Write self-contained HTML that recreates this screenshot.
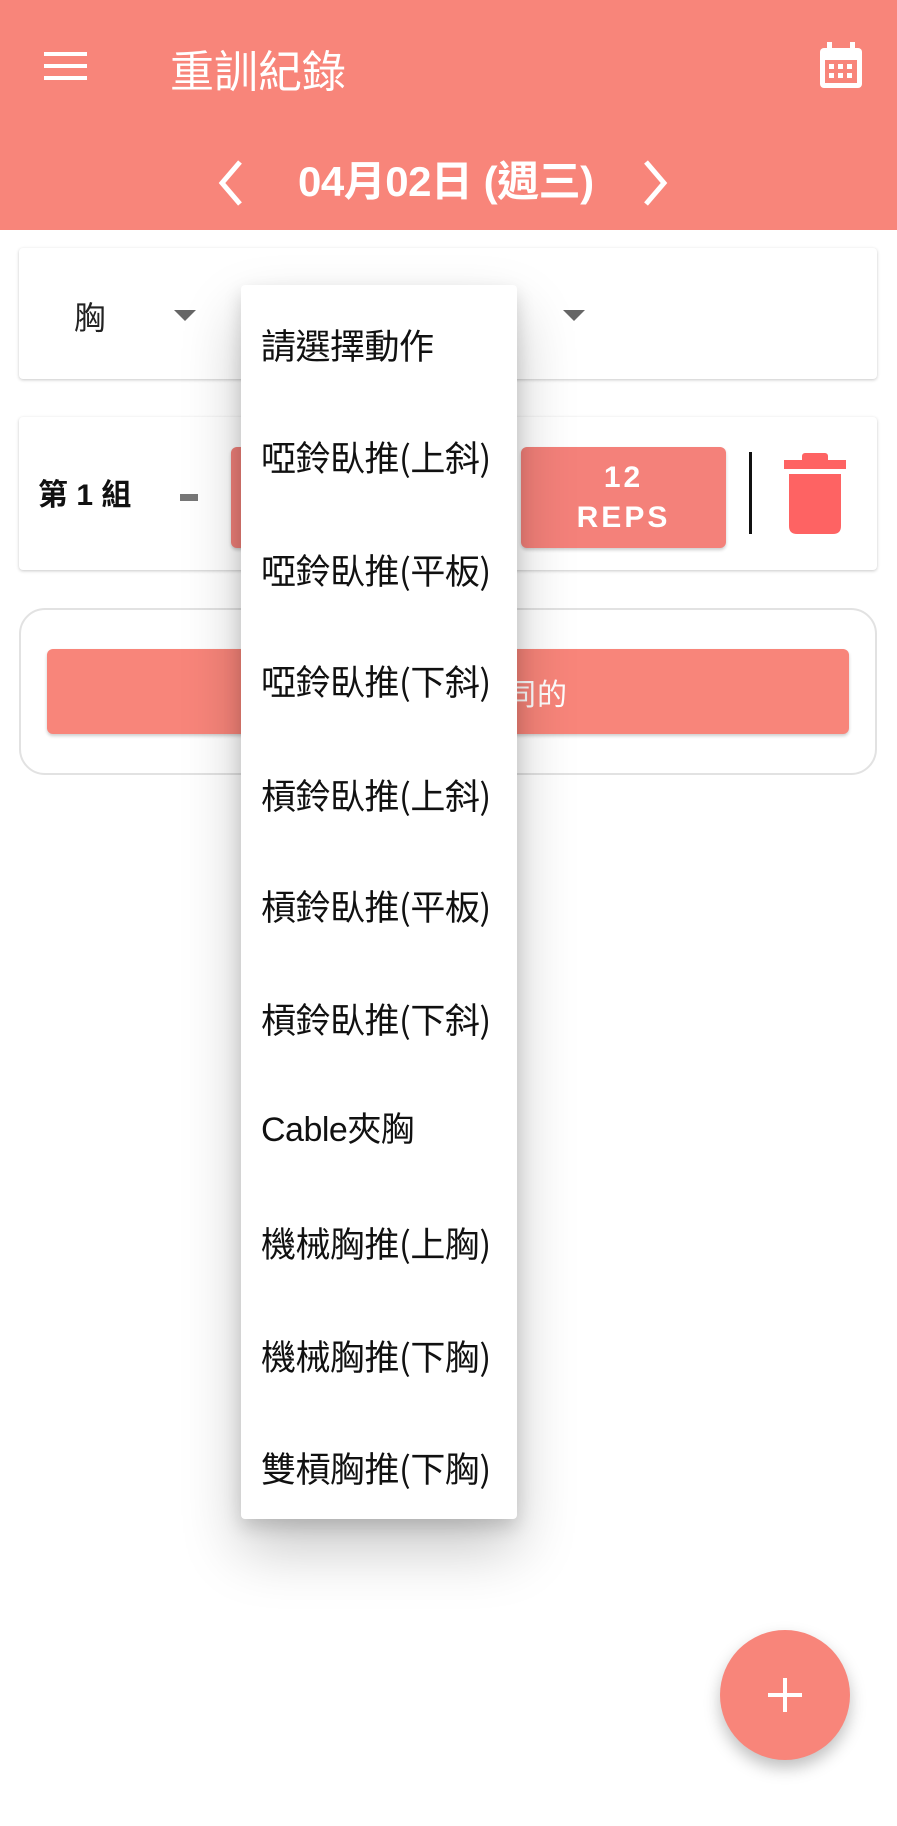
<!DOCTYPE html>
<html><head><meta charset="utf-8"><style>
*{margin:0;padding:0;box-sizing:border-box}
body{width:897px;height:1826px;background:#fff;position:relative;overflow:hidden;font-family:"Liberation Sans","Noto Sans CJK TC",sans-serif}
.abs{position:absolute}
.hdr{left:0;top:0;width:897px;height:230px;background:#f8857a}
.card{background:#fff;border-radius:4px;box-shadow:0 1px 3px rgba(0,0,0,.22)}
.tri{width:0;height:0;border-left:11px solid transparent;border-right:11px solid transparent;border-top:11px solid #666}
.dd{left:241px;top:285px;width:276px;height:1234px;background:#fff;border-radius:4px;box-shadow:0 30px 60px rgba(0,0,0,.22),0 8px 18px rgba(0,0,0,.15)}
.it{position:absolute;left:20px;font-size:35px;color:#111;line-height:42px;white-space:nowrap;font-family:"Noto Sans CJK TC",sans-serif;letter-spacing:-0.5px}
</style></head><body>
<div class="abs hdr"></div>
<div class="abs" style="left:44px;top:52px;width:43px;height:4px;background:#fff"></div>
<div class="abs" style="left:44px;top:64px;width:43px;height:4px;background:#fff"></div>
<div class="abs" style="left:44px;top:76px;width:43px;height:4px;background:#fff"></div>
<div class="abs" style="left:170px;top:42px;color:#fff;font-size:44px;line-height:52px;font-family:'Noto Sans CJK TC',sans-serif">重訓紀錄</div>
<svg class="abs" style="left:818px;top:40px" width="46" height="50" viewBox="0 0 46 50"><rect x="2" y="8" width="42" height="40" rx="4" fill="#fff"/><rect x="9" y="2" width="5" height="10" fill="#fff"/><rect x="32" y="2" width="5" height="10" fill="#fff"/><rect x="7" y="20" width="32" height="23" fill="#f8857a"/><g fill="#fff"><rect x="11" y="24" width="5" height="5"/><rect x="20" y="24" width="5" height="5"/><rect x="29" y="24" width="5" height="5"/><rect x="11" y="33" width="5" height="5"/><rect x="20" y="33" width="5" height="5"/><rect x="29" y="33" width="5" height="5"/></g></svg>
<svg class="abs" style="left:210px;top:158px" width="40" height="50" viewBox="0 0 40 50"><path d="M30 4 L12 25 L30 46" stroke="#fff" stroke-width="5" fill="none"/></svg>
<svg class="abs" style="left:636px;top:158px" width="40" height="50" viewBox="0 0 40 50"><path d="M10 4 L28 25 L10 46" stroke="#fff" stroke-width="5" fill="none"/></svg>
<div class="abs" style="left:298px;top:156px;color:#fff;font-size:42px;font-weight:bold;line-height:52px;font-family:'Liberation Sans','Noto Sans CJK TC',sans-serif;letter-spacing:-0.5px">04月02日 (週三)</div>

<div class="abs card" style="left:19px;top:248px;width:858px;height:131px"></div>
<div class="abs" style="left:74px;top:296px;font-size:32px;line-height:40px;color:#222;font-family:'Noto Sans CJK TC',sans-serif">胸</div>
<div class="abs tri" style="left:174px;top:310px"></div>
<div class="abs tri" style="left:563px;top:310px"></div>

<div class="abs card" style="left:19px;top:417px;width:858px;height:153px"></div>
<div class="abs" style="left:38px;top:477px;font-size:30px;font-weight:bold;line-height:38px;color:#111;font-family:'Liberation Sans','Noto Sans CJK TC',sans-serif">第 1 組</div>
<div class="abs" style="left:180px;top:494px;width:18px;height:7px;background:#777"></div>
<div class="abs" style="left:231px;top:447px;width:210px;height:101px;background:#f0807a;border-radius:6px;box-shadow:0 2px 3px rgba(0,0,0,.2)"></div>
<div class="abs" style="left:521px;top:447px;width:205px;height:101px;background:#f4817a;border-radius:6px;box-shadow:0 2px 3px rgba(0,0,0,.2);color:#fff;text-align:center;font-size:30px;font-weight:bold;letter-spacing:3px;line-height:40px;padding-top:11px">12<br>REPS</div>
<div class="abs" style="left:749px;top:452px;width:3px;height:82px;background:#111"></div>
<svg class="abs" style="left:784px;top:452px" width="62" height="84" viewBox="0 0 62 84"><rect x="0" y="8" width="62" height="9" fill="#fe6363"/><rect x="18" y="1" width="26" height="10" rx="3" fill="#fe6363"/><path d="M5 22 H57 V74 Q57 82 49 82 H13 Q5 82 5 74 Z" fill="#fe6363"/></svg>

<div class="abs" style="left:19px;top:608px;width:858px;height:167px;border:2px solid #e2e2e2;border-radius:26px"></div>
<div class="abs" style="left:47px;top:649px;width:802px;height:85px;background:#f8857a;border-radius:6px;box-shadow:0 2px 3px rgba(0,0,0,.2)"></div>
<div class="abs" style="right:329px;top:671px;color:#fff;font-size:30px;line-height:42px;letter-spacing:1px;font-family:'Noto Sans CJK TC',sans-serif">複製相同的</div>

<div class="abs dd">
<div class="it" style="top:39px">請選擇動作</div>
<div class="it" style="top:151px">啞鈴臥推(上斜)</div>
<div class="it" style="top:264px">啞鈴臥推(平板)</div>
<div class="it" style="top:375px">啞鈴臥推(下斜)</div>
<div class="it" style="top:489px">槓鈴臥推(上斜)</div>
<div class="it" style="top:600px">槓鈴臥推(平板)</div>
<div class="it" style="top:713px">槓鈴臥推(下斜)</div>
<div class="it" style="top:824px;font-family:'Liberation Sans','Noto Sans CJK TC',sans-serif;font-size:34px">Cable夾胸</div>
<div class="it" style="top:937px">機械胸推(上胸)</div>
<div class="it" style="top:1050px">機械胸推(下胸)</div>
<div class="it" style="top:1162px">雙槓胸推(下胸)</div>
</div>

<div class="abs" style="left:720px;top:1630px;width:130px;height:130px;border-radius:50%;background:#f8857a;box-shadow:0 8px 16px rgba(0,0,0,.25)"></div>
<div class="abs" style="left:768px;top:1693px;width:34px;height:4px;background:#fff"></div>
<div class="abs" style="left:783px;top:1678px;width:4px;height:34px;background:#fff"></div>
</body></html>
